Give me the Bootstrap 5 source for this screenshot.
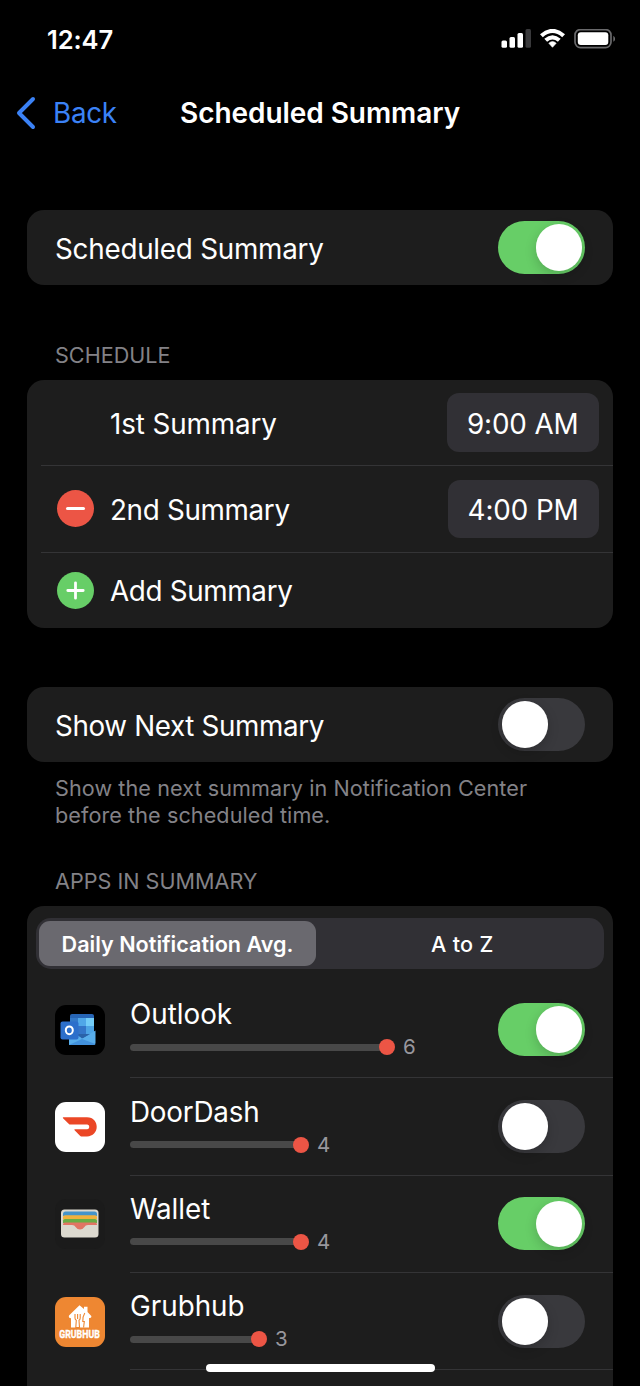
<!DOCTYPE html>
<html lang="en" data-bs-theme="dark">
<head>
<meta charset="utf-8">
<meta name="viewport" content="width=device-width, initial-scale=1">
<title>Scheduled Summary</title>
<link href="https://cdn.jsdelivr.net/npm/bootstrap@5.3.0/dist/css/bootstrap.min.css" rel="stylesheet">
<style>
  body { background: #000; color: #fff; font-family: Inter, "Liberation Sans", sans-serif; font-size: 27.8px; line-height: 34px; height: 1386px; overflow: hidden; }
  .screen { width: 640px; height: 1386px; overflow: hidden; }
  .statusbar { height: 78px; padding: 0 25px 0 47px; }
  .clock { font-size: 25.5px; font-weight: 600; letter-spacing: -.1px; padding-top: 1px; }
  .titlebar { height: 69px; padding-left: 16px; }
  .back { width: 164px; color: #3b82f6; gap: 17px; letter-spacing: -.3px; }
  .title { font-size: 28px; font-weight: 600; letter-spacing: -.06px; }
  .content { padding: 63px 27.4px 0 27px; }
  .panel { background: #1d1d1d; border: 0; border-radius: 17px; overflow: hidden; }
  .single { height: 75px; padding: 0 27.4px 0 28px; }
  .single span { padding-top: 2px; }
  .caption { color: #838287; font-size: 21.6px; line-height: 27.3px; padding-left: 28px; }
  .switch.form-check-input { position: relative; width: 87px; height: 53px; margin: 0; border: 0; border-radius: 27px; background: #39393d; float: none; flex: none; box-shadow: none; }
  .switch.form-check-input:checked { background: #67ce67; }
  .switch::before { content: ""; display: block; width: 46.5px; height: 46.5px; margin: 3.3px; border-radius: 50%; background: #fff; box-shadow: 0 4px 12px rgba(0,0,0,.18); }
  .switch:checked::before { margin-left: 37.5px; }
  .slot { margin-left: 14px; padding-left: 16px; padding-right: 14px; border-bottom: 1px solid #343436; height: 86.5px; }
  .slot:first-child { height: 86px; }
  .slot.last { height: 75px; border: 0; }
  .slot-mark { width: 37px; height: 37px; margin-right: 16px; flex: none; }
  .slot-name { padding-top: 2px; letter-spacing: -.33px; }
  .slot.last .slot-name { padding-top: 1px; }
  .chip { background: #313035; border-radius: 12px; height: 58.5px; padding: 2px 20px 0; letter-spacing: -.1px; }
  .segment { background: #313035; border-radius: 15px; margin: 12px 8.5px 12px 9px; height: 51px; padding: 3px; font-size: 21.6px; }
  .segment .tab-item { border-radius: 11px; flex: 1; height: 45px; }
  .segment .tab-on { background: #6a696f; flex: 0 0 277px; font-weight: 600; }
  .segment .tab-off { letter-spacing: .3px; padding-left: 7.5px; }
  .app { height: 97.35px; padding-left: 27.5px; }
  .app-icon { width: 50px; height: 50px; margin-right: 25.5px; flex: none; overflow: visible; }
  .app-body { border-bottom: 1px solid #343436; padding-right: 27.4px; }
  .app-text { margin-bottom: 3px; }
  .meter { height: 22px; margin-top: 5px; }
  .track { height: 7px; border-radius: 4px 0 0 4px; background: #484848; }
  .dot { width: 16px; height: 16px; border-radius: 50%; background: #ec5545; margin-right: 8px; margin-left: -1px; }
  .count { font-size: 20.5px; line-height: 22px; color: #98979d; }
  .home-bar { width: 229px; height: 8px; left: 205.5px; bottom: 14px; background: #fff; }
</style>
</head>
<body>
<div class="screen position-relative">
  <header>
    <div class="statusbar d-flex align-items-center justify-content-between">
      <span class="clock">12:47</span>
      <svg width="114" height="20" viewBox="0 0 114 20" aria-hidden="true">
        <g fill="#fff"><rect x="0.500" y="11.500" width="5.500" height="7.200" rx="1.500"/><rect x="8.500" y="8" width="5.500" height="10.700" rx="1.500"/><rect x="16.500" y="4" width="5.500" height="14.700" rx="1.500"/><rect x="24.500" y="0" width="5.500" height="18.700" rx="1.500" fill="#39393b"/></g>
        <path d="M39 5.200Q51.500-5.600 64 5.200L61.200 8.200Q51.500-.2 41.800 8.200Z" fill="#fff"/>
        <path d="M43.300 9.800Q51.500 2.600 59.700 9.800L56.900 12.800Q51.500 8 46.100 12.800Z" fill="#fff"/>
        <path d="M47.800 14.200Q51.500 11 55.200 14.200L51.500 18.300Z" fill="#fff" stroke="#fff" stroke-width=".6" stroke-linejoin="round"/>
        <rect x="74" y="0.600" width="36" height="18" rx="5.500" fill="none" stroke="#69696b" stroke-width="1.700"/>
        <rect x="76.800" y="3.200" width="30.500" height="12.800" rx="3" fill="#fff"/>
        <path d="M112.300 6.700Q116.400 9.700 112.300 12.700Z" fill="#69696b"/>
      </svg>
    </div>
    <nav class="titlebar d-flex align-items-center">
      <a class="back d-flex align-items-center text-decoration-none" href="#">
        <svg width="20" height="34" viewBox="0 0 20 34" aria-hidden="true"><path d="M17 3L3 17L17 31" fill="none" stroke="#3b82f6" stroke-width="4" stroke-linecap="round" stroke-linejoin="round"/></svg>
        <span>Back</span>
      </a>
      <span class="title">Scheduled Summary</span>
    </nav>
  </header>
  <main class="content">
    <section class="card panel">
      <label class="single d-flex align-items-center justify-content-between"><span style="letter-spacing:-.24px">Scheduled Summary</span><input class="form-check-input switch" type="checkbox" role="switch" checked></label>
    </section>

    <div class="caption" style="padding-top:56.5px;padding-bottom:11.400px">SCHEDULE</div>
    <section class="card panel">
      <div class="slot d-flex align-items-center"><span class="slot-mark"></span><span class="slot-name me-auto" style="letter-spacing:-.1px">1st Summary</span><span class="chip d-flex align-items-center">9:00 AM</span></div>
      <div class="slot d-flex align-items-center">
        <svg class="slot-mark" viewBox="0 0 37 37" aria-hidden="true"><circle cx="18.500" cy="18.500" r="18.500" fill="#ec5545"/><path d="M10.500 18.500H26.500" stroke="#fff" stroke-width="3" stroke-linecap="round"/></svg>
        <span class="slot-name me-auto">2nd Summary</span><span class="chip d-flex align-items-center">4:00 PM</span></div>
      <div class="slot last d-flex align-items-center">
        <svg class="slot-mark" viewBox="0 0 37 37" aria-hidden="true"><circle cx="18.500" cy="18.500" r="18.500" fill="#67ce67"/><path d="M10.800 18.500H26.200M18.500 10.800V26.200" stroke="#fff" stroke-width="2.800" stroke-linecap="round"/></svg>
        <span class="slot-name">Add Summary</span></div>
    </section>

    <section class="card panel" style="margin-top:59.500px">
      <label class="single d-flex align-items-center justify-content-between"><span style="letter-spacing:-.37px">Show Next Summary</span><input class="form-check-input switch" type="checkbox" role="switch"></label>
    </section>
    <div class="caption" style="padding-top:13px;letter-spacing:.08px">Show the next summary in Notification Center<br>before the scheduled time.</div>
    <div class="caption" style="padding-top:38px;padding-bottom:11px">APPS IN SUMMARY</div>

    <section class="card panel">
      <div class="segment d-flex text-center">
        <div class="tab-item tab-on d-flex align-items-center justify-content-center">Daily Notification Avg.</div>
        <div class="tab-item tab-off d-flex align-items-center justify-content-center fw-medium">A to Z</div>
      </div>

      <div class="app d-flex align-items-center">
        <svg class="app-icon" viewBox="0 0 50 50" aria-hidden="true">
          <rect width="50" height="50" rx="11" fill="#000"/>
          <path d="M15 11q0-2 2-2h20q2 0 2 2v22H15z" fill="#2765b5"/>
          <path d="M15 13h8v8h-8z" fill="#3379c8"/><path d="M23 13h8v8h-8z" fill="#50a7e8"/><path d="M31 13h8v8h-8z" fill="#73cdf8"/>
          <path d="M15 21h8v9h-8z" fill="#2362b1"/><path d="M23 21h8v9h-8z" fill="#3475c8"/><path d="M31 21h8v9h-8z" fill="#4da4e5"/>
          <path d="M14 27L28 33L40.500 25.500V38q0 2-2 2H14z" fill="#58adea"/><path d="M22 29h13l-8 4.500z" fill="#2a62a8"/><path d="M27 34L40.500 39q-.5 1-2 1H14z" fill="#4291dc"/>
          <rect x="5.500" y="16.500" width="18" height="18" rx="2" fill="#2c6fcb"/>
          <ellipse cx="14.300" cy="25.300" rx="3.500" ry="3.900" fill="none" stroke="#fff" stroke-width="2"/>
        </svg>
        <div class="app-body d-flex align-items-center justify-content-between flex-grow-1 h-100"><div class="app-text"><div>Outlook</div><div class="meter d-flex align-items-center"><div class="track" style="width:250px"></div><div class="dot"></div><span class="count">6</span></div></div><input class="form-check-input switch" type="checkbox" role="switch" aria-label="Outlook" checked></div>
      </div>

      <div class="app d-flex align-items-center">
        <svg class="app-icon" viewBox="0 0 50 50" aria-hidden="true">
          <rect width="50" height="50" rx="11" fill="#fff"/>
          <path d="M8.300 15.300H32C38.500 15.300 41.700 20 41.700 24.800C41.700 30 38 34.400 32 34.400H26.300Q25.600 34.400 25 33.800L19.600 28.300Q18.800 27.300 20 27.300H32.300Q34.300 27 34.300 25T32.300 22.600H15.200Q14.500 22.600 13.900 22L8 16.300Q7.500 15.300 8.300 15.300Z" fill="#eb4726"/>
        </svg>
        <div class="app-body d-flex align-items-center justify-content-between flex-grow-1 h-100"><div class="app-text"><div style="letter-spacing:-.2px">DoorDash</div><div class="meter d-flex align-items-center"><div class="track" style="width:164px"></div><div class="dot"></div><span class="count">4</span></div></div><input class="form-check-input switch" type="checkbox" role="switch" aria-label="DoorDash"></div>
      </div>

      <div class="app d-flex align-items-center">
        <svg class="app-icon" viewBox="0 0 50 50" aria-hidden="true">
          <rect width="50" height="50" rx="11" fill="#1b1b1b"/>
          <rect x="6" y="10.500" width="37.500" height="28" rx="3.500" fill="#dcd9cf"/>
          <path d="M8 17v-2q0-2.500 2.500-2.500h29Q42 12.500 42 15v2z" fill="#4494ca"/>
          <path d="M8 20.500V18q0-1.800 2-1.800h30q2 0 2 1.800v2.500z" fill="#f1b13c"/>
          <path d="M8 24v-2.500q0-1.500 2-1.500h30q2 0 2 1.500V24z" fill="#69ad45"/>
          <path d="M8 25.500q0-2 2-2h30q2 0 2 2v.500H33q-2.500 0-3.800 2.200-1.500 2.300-4.200 2.300t-4.200-2.300Q19.500 26 17 26H8z" fill="#e27463"/>
        </svg>
        <div class="app-body d-flex align-items-center justify-content-between flex-grow-1 h-100"><div class="app-text"><div>Wallet</div><div class="meter d-flex align-items-center"><div class="track" style="width:164px"></div><div class="dot"></div><span class="count">4</span></div></div><input class="form-check-input switch" type="checkbox" role="switch" aria-label="Wallet" checked></div>
      </div>

      <div class="app d-flex align-items-center">
        <svg class="app-icon" viewBox="0 0 50 50" aria-hidden="true">
          <rect width="50" height="50" rx="11" fill="#ee8732"/>
          <path d="M14 18.500L24.500 8.200L29 12V9.800h3.500V15l3.800 4q.5 2-2.300 2v9.500H16V21.200q-2.800-.2-2-2.700z" fill="#fff"/>
          <path d="M20 17v4q0 1.800 1.300 2.200L20.800 30.500h3.700L24 23.200Q25.200 22.800 25.200 21v-4M22.600 17v5M29.800 16Q27.300 20 27.800 24.500h1.500L28.600 30.500" fill="none" stroke="#ee8732" stroke-width="1.100"/>
          <text x="24.500" y="41.200" fill="#fff" stroke="#fff" stroke-width=".35" text-anchor="middle" textLength="40.500" lengthAdjust="spacingAndGlyphs" font-family="Roboto, sans-serif" font-size="11" font-weight="700">GRUBHUB</text>
        </svg>
        <div class="app-body d-flex align-items-center justify-content-between flex-grow-1 h-100"><div class="app-text"><div>Grubhub</div><div class="meter d-flex align-items-center"><div class="track" style="width:122px"></div><div class="dot"></div><span class="count">3</span></div></div><input class="form-check-input switch" type="checkbox" role="switch" aria-label="Grubhub"></div>
      </div>
      <div style="height:40px"></div>
    </section>
  </main>
  <div class="home-bar position-absolute rounded-pill"></div>
</div>
<script src="https://cdn.jsdelivr.net/npm/bootstrap@5.3.0/dist/js/bootstrap.bundle.min.js"></script>
</body>
</html>
